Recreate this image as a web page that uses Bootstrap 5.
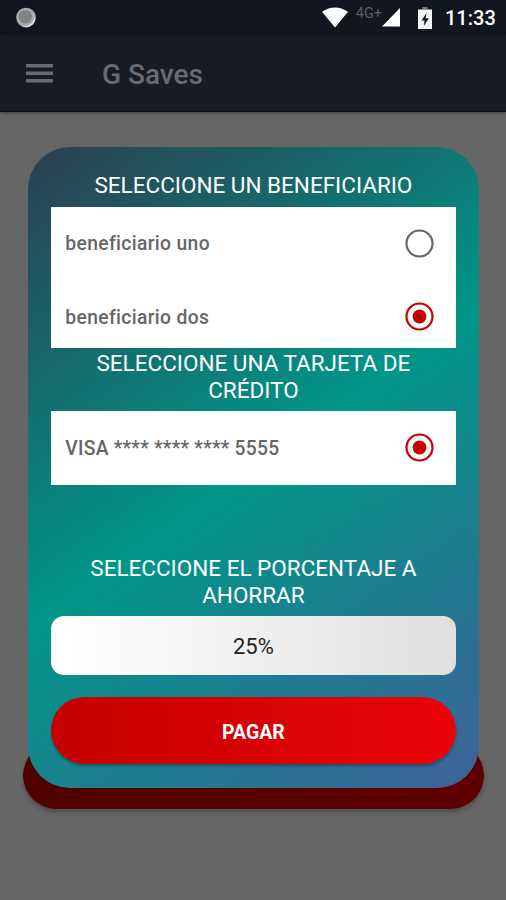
<!DOCTYPE html>
<html lang="es">
<head>
<meta charset="utf-8">
<meta name="viewport" content="width=device-width, initial-scale=1">
<title>G Saves</title>
<link href="https://cdn.jsdelivr.net/npm/bootstrap@5.3.0/dist/css/bootstrap.min.css" rel="stylesheet">
<style>
body{font-family:Roboto,"Liberation Sans",sans-serif;background:#666;min-height:900px;overflow:hidden;line-height:1.172}
.status-bar{height:35px;background:#12161e;color:#fff;padding:0 11px 0 15px}
.net-label{font-size:14.5px;color:#5c5f64;line-height:1;margin:-7px 0 0 8px}
.clock{font-size:20px;font-weight:500;line-height:1;width:50px;margin-left:13px;white-space:nowrap}
.battery{margin-left:18px}
.app-bar{height:77px;background:#161b26;border-bottom:1px solid #0b0e15;box-shadow:0 1px 4px rgba(0,0,0,.4);padding:0 26px}
.app-title{font-size:28px;font-weight:500;color:#696b6e;margin-left:49px;padding-top:4px}
.stage{padding:35px 27.500px 0 28.300px}
.behind-btn{left:23px;bottom:-21.5px;width:461px;height:67px;border-radius:33.5px;background:linear-gradient(90deg,#510000,#5f0000);box-shadow:0 3px 4px rgba(0,0,0,.25)}
.pay-dialog{height:640.5px;border-radius:42px;background:linear-gradient(144.9deg,#2c3e50,#009688 50%,#3f6199);padding:25px 22.5px 23.3px}
.step-title{font-size:22.5px;line-height:26.5px;font-weight:400;color:#fff;text-align:center;margin:0 0 8px}
.step-title-card{padding-top:2px}
.option-box{background:#fff;color:#666}
.option-row{height:73.5px;padding:0 22.5px 0 14.5px;font-size:19.3px;font-weight:500}
.option-text{letter-spacing:.34px;padding-top:3px}
.card-text-masked{letter-spacing:.26px;padding-top:3px}
.percent-box{height:59px;border-radius:13px;background:linear-gradient(90deg,#fff 5%,#dfdfdf);color:#222;font-size:22px;padding-top:2px}
.btn-pay{height:67px;border-radius:33.5px;border:0;background:linear-gradient(90deg,#c40000,#ea0408);color:#fff;font-size:19.5px;font-weight:700;box-shadow:0 2px 3px rgba(0,0,0,.3);margin-top:22px;padding-top:9px}
.beneficiaries{height:141.5px;overflow:hidden}
</style>
</head>
<body>
<header>
  <div class="status-bar d-flex align-items-center">
    <svg width="22" height="22" viewBox="0 0 22 22"><circle cx="11" cy="10.500" r="9.800" fill="#a9adb0"/><path d="M20.300 9A9.800 9.800 0 0 1 8 19.800c6 0 11-4 12.300-10.800z" fill="#f2f2f2"/><circle cx="10.300" cy="9.800" r="6.800" fill="#7f8386"/></svg>
    <svg class="ms-auto" width="26" height="21" viewBox="0 0 26 21"><path d="M0 4.800Q13-3.800 26 4.800L13 20.500z" fill="#fff"/></svg>
    <span class="net-label">4G+</span>
    <svg width="18" height="19" viewBox="0 0 18 19"><path d="M18 0V18.500H0z" fill="#fff"/></svg>
    <svg class="battery" width="14" height="22" viewBox="0 0 14 22"><path d="M4.500 0h5v2.500h-5z" fill="#777"/><path d="M0 2.500h14V22H0z" fill="#f4f4f4"/><path d="M8.500 6L3.500 13.500h3L5.800 19l5-7.800H7.600z" fill="#12161e"/></svg>
    <span class="clock">11:33</span>
  </div>
  <nav class="app-bar d-flex align-items-center">
    <svg width="27" height="19" viewBox="0 0 27 19" fill="#696b6e"><path d="M0 0h27v3.500H0zM0 7.500h27V11H0zM0 15h27v3.500H0z"/></svg>
    <span class="app-title">G Saves</span>
  </nav>
</header>
<main class="stage position-relative">
  <div class="behind-btn position-absolute"></div>
  <section class="pay-dialog position-relative d-flex flex-column">
    <h2 class="step-title">SELECCIONE UN BENEFICIARIO</h2>
    <div class="option-box beneficiaries">
      <div class="option-row d-flex align-items-center justify-content-between"><span class="option-text">beneficiario uno</span>
        <svg width="29" height="29" viewBox="0 0 29 29"><circle cx="14.500" cy="14.500" r="13" fill="none" stroke="#666" stroke-width="2.200"/></svg></div>
      <div class="option-row d-flex align-items-center justify-content-between"><span class="option-text">beneficiario dos</span>
        <svg width="29" height="29" viewBox="0 0 29 29"><circle cx="14.500" cy="14.500" r="13" fill="none" stroke="#c60000" stroke-width="2.200"/><circle cx="14.500" cy="14.500" r="6.900" fill="#c60000"/></svg></div>
    </div>
    <h2 class="step-title step-title-card">SELECCIONE UNA TARJETA DE CRÉDITO</h2>
    <div class="option-box">
      <div class="option-row d-flex align-items-center justify-content-between"><span class="card-text-masked">VISA **** **** **** 5555</span>
        <svg width="29" height="29" viewBox="0 0 29 29"><circle cx="14.500" cy="14.500" r="13" fill="none" stroke="#c60000" stroke-width="2.200"/><circle cx="14.500" cy="14.500" r="6.900" fill="#c60000"/></svg></div>
    </div>
    <h2 class="step-title mt-auto">SELECCIONE EL PORCENTAJE A AHORRAR</h2>
    <div class="percent-box d-flex align-items-center justify-content-center">25%</div>
    <button class="btn btn-pay w-100">PAGAR</button>
  </section>
</main>
<script src="https://cdn.jsdelivr.net/npm/bootstrap@5.3.0/dist/js/bootstrap.bundle.min.js"></script>
</body>
</html>
